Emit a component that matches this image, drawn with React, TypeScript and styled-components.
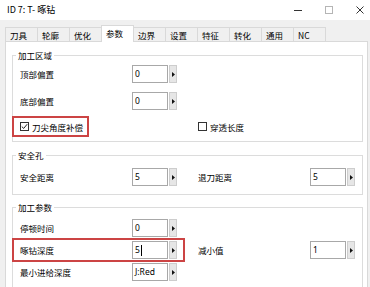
import React from 'react';
import styled, { createGlobalStyle, css } from 'styled-components';

const GlobalStyle = createGlobalStyle`
  html, body { margin: 0; padding: 0; }
  body {
    background: #f0f0f0;
    font-family: "Noto Sans CJK SC", "Noto Sans", sans-serif;
    font-size: 8.5px;
    color: #000;
  }
  * { box-sizing: border-box; }
`;

const Window = styled.div`
  width: 370px;
  height: 287px;
  overflow: hidden;
  display: flex;
  flex-direction: column;
  background: #f0f0f0;
`;

const TitleBar = styled.div`
  height: 20px;
  flex: none;
  display: flex;
  align-items: center;
  background: #fff;
  padding-left: 7px;
`;

const Title = styled.span`
  flex: 1;
  font-size: 9px;
  line-height: 12px;
`;

const Controls = styled.div`
  display: flex;
  height: 100%;
  margin-right: -5px;
`;

const ControlButton = styled.div`
  width: 31px;
  display: flex;
  align-items: center;
  justify-content: center;
`;

const TabStrip = styled.div`
  flex: none;
  height: 21px;
  padding: 7px 0 0 5px;
  display: flex;
  align-items: flex-end;
`;

const Tab = styled.div<{ $active?: boolean }>`
  width: 33px;
  height: 14px;
  margin-right: -1px;
  padding-left: 4px;
  border: 1px solid #d9d9d9;
  border-bottom: none;
  background: #f0f0f0;
  display: flex;
  align-items: center;
  font-size: 8.5px;
  line-height: 12px;
  white-space: nowrap;
  ${(p) =>
    p.$active &&
    css`
      position: relative;
      z-index: 2;
      height: 17px;
      margin-bottom: -1px;
      background: #fff;
      padding-bottom: 2px;
    `}
`;

const Panel = styled.div`
  flex: 1;
  margin: 0 2px 0 5px;
  border: 1px solid #d9d9d9;
  background: #fff;
  padding: 7px 4px 0 6px;
  display: flex;
  flex-direction: column;
`;

const Group = styled.fieldset<{ $top: number; $bottom: number; $mt: number }>`
  margin: ${(p) => p.$mt}px 0 0 0;
  min-width: 0;
  border: 1px solid #dcdcdc;
  padding: ${(p) => p.$top}px 7px ${(p) => p.$bottom}px 7px;
  display: flex;
  flex-direction: column;
  gap: ${(p) => 0}px;
`;

const Legend = styled.legend`
  font-size: 8.5px;
  line-height: 12px;
  padding: 0 2px;
  margin-left: -4px;
`;

const Rows = styled.div<{ $gap: number }>`
  display: flex;
  flex-direction: column;
  gap: ${(p) => p.$gap}px;
`;

const Row = styled.div<{ $h?: number }>`
  display: grid;
  grid-template-columns: 178px 1fr;
  align-items: center;
  height: ${(p) => p.$h ?? 18}px;
`;

const highlight = css<{ $pr: number }>`
  border: 2px solid #cc4444;
  margin: -3px 0 -3px -8px;
  padding: 1px ${(p) => p.$pr}px 1px 6px;
  justify-self: start;
`;

const Field = styled.div<{ $hl?: boolean; $pr: number }>`
  display: flex;
  align-items: center;
  height: 18px;
  ${(p) => p.$hl && highlight}
  ${(p) => p.$hl && css`height: 24px;`}
`;

const Label = styled.span`
  width: 112px;
  flex: none;
  font-size: 8.5px;
  line-height: 12px;
  white-space: nowrap;
`;

const InputBox = styled.div`
  width: 36px;
  height: 18px;
  border: 1px solid #a8a8a8;
  background: #fff;
  padding-left: 2px;
  font-family: "Noto Sans", "Noto Sans CJK SC", sans-serif;
  font-size: 8.5px;
  line-height: 16px;
  display: flex;
  align-items: center;
  white-space: nowrap;
`;

const Caret = styled.span`
  display: inline-block;
  width: 1px;
  height: 11px;
  background: #000;
  margin-left: 1px;
`;

const SpinButton = styled.div`
  width: 8px;
  height: 18px;
  margin-left: 1px;
  background: #e6e6e6;
  border: 1px solid #cdcdcd;
  display: flex;
  align-items: center;
  justify-content: center;
`;

const CheckLabel = styled.div<{ $hl?: boolean; $pr: number }>`
  display: flex;
  align-items: center;
  gap: 3px;
  height: 15px;
  font-size: 8.5px;
  line-height: 12px;
  white-space: nowrap;
  ${(p) => p.$hl && highlight}
  ${(p) => p.$hl && css`height: 21px;`}
`;

const Box = styled.span`
  width: 9px;
  height: 9px;
  flex: none;
  border: 1px solid #333;
  background: #fff;
  display: flex;
  align-items: center;
  justify-content: center;
`;

const Check: React.FC<{ checked?: boolean }> = ({ checked }) => (
  <Box>
    {checked && (
      <svg width="7" height="7" viewBox="0 0 7 7">
        <path d="M0.8 3.6 L2.7 5.4 L6.2 1.2" fill="none" stroke="#222" strokeWidth="1" />
      </svg>
    )}
  </Box>
);

const Spin: React.FC<{ value: string; caret?: boolean }> = ({ value, caret }) => (
  <>
    <InputBox>
      {value}
      {caret && <Caret />}
    </InputBox>
    <SpinButton>
      <svg width="3" height="5" viewBox="0 0 3 5">
        <path d="M0 0 L3 2.5 L0 5 Z" fill="#111" />
      </svg>
    </SpinButton>
  </>
);

const NumField: React.FC<{ label: string; value: string; hl?: boolean; caret?: boolean }> = ({
  label,
  value,
  hl,
  caret,
}) => (
  <Field $hl={hl} $pr={6}>
    <Label>{label}</Label>
    <Spin value={value} caret={caret} />
  </Field>
);

const tabs = ['刀具', '轮廓', '优化', '参数', '边界', '设置', '特征', '转化', '通用', 'NC'];

export default function App() {
  return (
    <>
      <GlobalStyle />
      <Window>
        <TitleBar>
          <Title>ID 7: T- 啄钻</Title>
          <Controls>
            <ControlButton>
              <svg width="8" height="8" viewBox="0 0 8 8">
                <path d="M0 4.5 H8" stroke="#333" strokeWidth="1" />
              </svg>
            </ControlButton>
            <ControlButton>
              <svg width="8" height="8" viewBox="0 0 8 8">
                <rect x="0.5" y="0.5" width="7" height="7" fill="none" stroke="#b5b5b5" strokeWidth="1" />
              </svg>
            </ControlButton>
            <ControlButton>
              <svg width="8" height="8" viewBox="0 0 8 8">
                <path d="M0.5 0.5 L7.5 7.5 M7.5 0.5 L0.5 7.5" stroke="#333" strokeWidth="1" />
              </svg>
            </ControlButton>
          </Controls>
        </TitleBar>
        <TabStrip>
          {tabs.map((t) => (
            <Tab key={t} $active={t === '参数'}>
              {t}
            </Tab>
          ))}
        </TabStrip>
        <Panel>
          <Group $top={4} $bottom={7} $mt={0}>
            <Legend>加工区域</Legend>
            <Rows $gap={9}>
              <Row>
                <NumField label="顶部偏置" value="0" />
              </Row>
              <Row>
                <NumField label="底部偏置" value="0" />
              </Row>
              <Row $h={15}>
                <CheckLabel $hl $pr={4}>
                  <Check checked />
                  刀尖角度补偿
                </CheckLabel>
                <CheckLabel $pr={0}>
                  <Check />
                  穿透长度
                </CheckLabel>
              </Row>
            </Rows>
          </Group>
          <Group $top={7} $bottom={8} $mt={7}>
            <Legend>安全孔</Legend>
            <Rows $gap={0}>
              <Row>
                <NumField label="安全距离" value="5" />
                <NumField label="退刀距离" value="5" />
              </Row>
            </Rows>
          </Group>
          <Group $top={6} $bottom={8} $mt={6}>
            <Legend>加工参数</Legend>
            <Rows $gap={4}>
              <Row>
                <NumField label="停顿时间" value="0" />
              </Row>
              <Row>
                <NumField label="啄钻深度" value="5" hl caret />
                <NumField label="减小值" value="1" />
              </Row>
              <Row>
                <NumField label="最小进给深度" value="J:Red" />
              </Row>
            </Rows>
          </Group>
        </Panel>
      </Window>
    </>
  );
}
